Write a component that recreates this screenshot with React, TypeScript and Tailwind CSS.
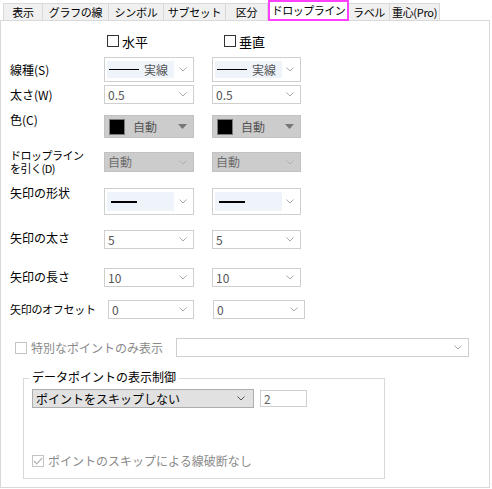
import type { ReactNode } from "react";

const FONT = "font-['Noto_Sans_CJK_JP','Noto_Sans',sans-serif]";

const tabs = ["表示", "グラフの線", "シンボル", "サブセット", "区分", "ドロップライン", "ラベル", "重心(Pro)"];
const tabWidths = [40, 67, 56, 63, 43, 81, 42, 51];
const ACTIVE = 5;

function Chevron({ className = "text-[#a8a8a8]" }: { className?: string }) {
  return (
    <svg width="8" height="5" viewBox="0 0 8 5" className={className}>
      <path d="M0.5 0.5 L4 4 L7.5 0.5" fill="none" stroke="currentColor" strokeWidth="1" />
    </svg>
  );
}

function Check({ checked = false, disabled = false }: { checked?: boolean; disabled?: boolean }) {
  return (
    <span
      className={`flex h-[12px] w-[12px] shrink-0 items-center justify-center border bg-white ${
        disabled ? "border-[#c4c4c4]" : "border-[#333]"
      }`}
    >
      {checked && (
        <svg width="10" height="8" viewBox="0 0 10 8">
          <path d="M1 4 L3.8 6.8 L9 1" fill="none" stroke="#b5b5b5" strokeWidth="1.2" />
        </svg>
      )}
    </span>
  );
}

// plain combo box, white with a thin chevron
function Combo({ children, className = "" }: { children?: ReactNode; className?: string }) {
  return (
    <div className={`flex h-full items-center justify-between border border-[#cfcfcf] bg-white pl-[3px] pr-[6px] ${className}`}>
      <span className="text-[12px] leading-none text-[#555]">{children}</span>
      <Chevron />
    </div>
  );
}

function LineCombo({ label, thick = false }: { label?: string; thick?: boolean }) {
  return (
    <div className="flex h-full items-center justify-between border border-[#cfcfcf] bg-white pl-[2px] pr-[6px]">
      <div className="flex h-[calc(100%-6px)] w-[67px] items-center gap-[5px] bg-[#eff4fb] pl-[2px]">
        {thick ? (
          <span className="ml-[2px] block h-[2px] w-[26px] bg-black" />
        ) : (
          <span className="block h-[1px] w-[30px] bg-black" />
        )}
        {label && <span className="text-[12px] leading-none text-[#555]">{label}</span>}
      </div>
      <Chevron />
    </div>
  );
}

function ColorCombo() {
  return (
    <div className="flex h-full items-center border border-[#c2c2c2] bg-[#cccccc] pl-[4px] pr-[6px]">
      <span className="block h-[16px] w-[16px] border border-[#7a7a7a] bg-black" />
      <span className="ml-[8px] text-[12px] leading-none text-[#555]">自動</span>
      <svg width="9" height="5" viewBox="0 0 9 5" className="ml-auto">
        <path d="M0 0 H9 L4.5 5 Z" fill="#777" />
      </svg>
    </div>
  );
}

function DisabledCombo() {
  return (
    <div className="flex h-full items-center justify-between border border-[#c2c2c2] bg-[#cccccc] pl-[3px] pr-[6px]">
      <span className="text-[12px] leading-none text-[#6d6d6d]">自動</span>
      <Chevron className="text-[#b0b0b0]" />
    </div>
  );
}

function Row({
  label,
  mt,
  h,
  a,
  b,
  top = false,
  wide = false,
}: {
  label: ReactNode;
  mt: string;
  h: string;
  a: ReactNode;
  b: ReactNode;
  top?: boolean;
  wide?: boolean;
}) {
  return (
    <div className={`flex ${mt} ${h}`}>
      <div
        className={`flex w-[94px] whitespace-nowrap text-[12px] leading-none text-black ${
          top ? "items-start" : "items-center"
        }`}
      >
        {label}
      </div>
      <div className={wide ? "ml-[4px] w-[86px]" : "w-[90px]"}>{a}</div>
      <div className={wide ? "ml-[19px] w-[92px]" : "ml-[18px] w-[89px]"}>{b}</div>
    </div>
  );
}

export default function App() {
  return (
    <div className={`h-[489px] w-[492px] bg-white ${FONT}`}>
      {/* tab strip */}
      <div className="flex h-[20px] items-end pl-[3px]">
        {tabs.map((t, i) =>
          i === ACTIVE ? (
            <div
              key={t}
              style={{ width: tabWidths[i] }}
              className="relative z-10 -mb-px flex h-[21px] shrink-0 items-center justify-center whitespace-nowrap border-2 border-[#ff40ff] bg-white text-[11px] leading-none tracking-[-0.5px] text-black"
            >
              {t}
            </div>
          ) : (
            <div
              key={t}
              style={{ width: tabWidths[i] }}
              className="-ml-px flex h-[17px] shrink-0 items-center justify-center whitespace-nowrap border border-b-0 border-[#d9d9d9] bg-[#f0f0f0] text-[11px] leading-none tracking-[-0.3px] text-black first:ml-0"
            >
              {t}
            </div>
          )
        )}
      </div>

      {/* page body */}
      <div className="h-[468px] w-[490px] border border-[#d9d9d9] pl-[9px]">
        <div className="mt-[10px] flex h-[20px] items-center">
          <div className="ml-[97px] flex items-center gap-[3px]">
            <Check />
            <span className="text-[13px] leading-none">水平</span>
          </div>
          <div className="ml-[76px] flex items-center gap-[3px]">
            <Check />
            <span className="text-[13px] leading-none">垂直</span>
          </div>
        </div>

        <Row label="線種(S)" mt="mt-[6px]" h="h-[25px]" a={<LineCombo label="実線" />} b={<LineCombo label="実線" />} />
        <Row label="太さ(W)" mt="mt-[3px]" h="h-[19px]" a={<Combo>0.5</Combo>} b={<Combo>0.5</Combo>} />
        <Row
          label={<span className="-mt-[1px]">色(C)</span>}
          top
          mt="mt-[11px]"
          h="h-[23px]"
          a={<ColorCombo />}
          b={<ColorCombo />}
        />
        <Row
          label={
            <span className="-mt-[3px] flex flex-col text-[11px] leading-[13px] tracking-[-0.5px]">
              <span>ドロップライン</span>
              <span>を引く(D)</span>
            </span>
          }
          top
          mt="mt-[14px]"
          h="h-[20px]"
          a={<DisabledCombo />}
          b={<DisabledCombo />}
        />
        <Row
          label={<span className="mt-[-1px]">矢印の形状</span>}
          top
          mt="mt-[16px]"
          h="h-[27px]"
          a={<LineCombo thick />}
          b={<LineCombo thick />}
        />
        <Row label={<span className="-mt-[4px]">矢印の太さ</span>} mt="mt-[15px]" h="h-[19px]" a={<Combo>5</Combo>} b={<Combo>5</Combo>} />
        <Row label={<span className="-mt-[2px]">矢印の長さ</span>} mt="mt-[19px]" h="h-[19px]" a={<Combo>10</Combo>} b={<Combo>10</Combo>} />
        <Row
          label={<span className="text-[11px] tracking-[-0.3px]">矢印のオフセット</span>}
          wide
          mt="mt-[13px]"
          h="h-[19px]"
          a={<Combo>0</Combo>}
          b={<Combo>0</Combo>}
        />

        {/* special points */}
        <div className="mt-[19px] flex h-[19px] items-center">
          <div className="ml-[5px] flex items-center gap-[4px]">
            <Check disabled />
            <span className="text-[12px] leading-none text-[#8a8a8a]">特別なポイントのみ表示</span>
          </div>
          <div className="ml-auto mr-[20px] h-full w-[293px]">
            <Combo />
          </div>
        </div>

        {/* data point display group */}
        <div className="relative ml-[13px] mt-[21px] h-[101px] w-[362px] border border-[#d9d9d9] pl-[8px] pt-[10px]">
          <span className="absolute -top-[8px] left-[5px] bg-white px-[3px] text-[12px] leading-none text-black">
            データポイントの表示制御
          </span>
          <div className="flex items-center">
            <div className="flex h-[19px] w-[222px] items-center justify-between border border-[#adadad] bg-[#e1e1e1] pl-[3px] pr-[8px]">
              <span className="text-[12px] leading-none text-black">ポイントをスキップしない</span>
              <Chevron className="text-[#555]" />
            </div>
            <div className="ml-[6px] flex h-[17px] w-[47px] items-center border border-[#cfcfcf] pl-[3px] text-[12px] leading-none text-[#666]">
              2
            </div>
          </div>
          <div className="mt-[47px] flex items-center gap-[4px]">
            <Check checked disabled />
            <span className="text-[12px] leading-none text-[#8a8a8a]">ポイントのスキップによる線破断なし</span>
          </div>
        </div>
      </div>
    </div>
  );
}
